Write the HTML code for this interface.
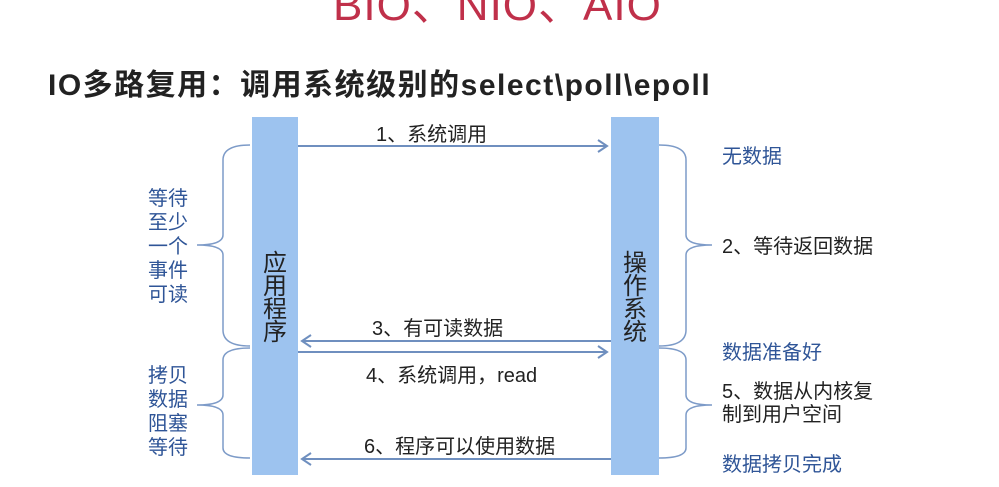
<!DOCTYPE html>
<html><head><meta charset="utf-8"><style>
body{margin:0;width:999px;height:487px;background:#fff;position:relative;overflow:hidden;font-family:"Liberation Sans","Noto Sans CJK SC",sans-serif}
.a{position:absolute;white-space:nowrap}
.bl{color:#2f5597;font-size:19px}
.bk{color:#222;font-size:20px}
</style></head><body>
<div class="a" style="left:333px;top:-31px;font-size:44px;color:#c0304a;letter-spacing:1px">BIO、NIO、AIO</div>
<div class="a" style="left:48px;top:60px;font-size:30px;font-weight:bold;color:#222;letter-spacing:1.5px">IO多路复用：调用系统级别的select\poll\epoll</div>
<svg class="a" style="left:0;top:0" width="999" height="487">
<rect x="252" y="117" width="46" height="358" fill="#9dc3ef"/>
<rect x="611" y="117" width="48" height="358" fill="#9dc3ef"/>
<g stroke="#6f8fbf" stroke-width="2" fill="none">
<line x1="298" y1="146" x2="607" y2="146"/><path d="M598 140 L607 146 L598 152"/>
<line x1="302" y1="341" x2="611" y2="341"/><path d="M311 335 L302 341 L311 347"/>
<line x1="298" y1="352" x2="607" y2="352"/><path d="M598 346 L607 352 L598 358"/>
<line x1="302" y1="459" x2="611" y2="459"/><path d="M311 453 L302 459 L311 465"/>
</g>
<g stroke="#7d9bc8" stroke-width="1.5" fill="none">
<path d="M250 145 Q223 145 223 160 L223 235 Q223 245 197 245 Q223 245 223 255 L223 330 Q223 346 250 346"/>
<path d="M250 348 Q223 348 223 360 L223 395 Q223 405 197 405 Q223 405 223 415 L223 448 Q223 458 250 458"/>
<path d="M659 145 Q686 145 686 160 L686 235 Q686 245 712 245 Q686 245 686 255 L686 330 Q686 346 659 346"/>
<path d="M659 348 Q686 348 686 360 L686 395 Q686 405 712 405 Q686 405 686 415 L686 448 Q686 458 659 458"/>
</g>
</svg>
<div class="a" style="left:263px;top:252px;font-size:24px;line-height:23px;color:#222;width:24px;white-space:normal">应用程序</div>
<div class="a" style="left:623px;top:252px;font-size:24px;line-height:23px;color:#222;width:24px;white-space:normal">操作系统</div>
<div class="a bk" style="left:376px;top:118px">1、系统调用</div>
<div class="a bk" style="left:372px;top:312px">3、有可读数据</div>
<div class="a bk" style="left:366px;top:359px">4、系统调用，read</div>
<div class="a bk" style="left:364px;top:430px">6、程序可以使用数据</div>
<div class="a bl" style="left:148px;top:187px;font-size:20px;line-height:24px;white-space:normal;width:42px">等待至少一个事件可读</div>
<div class="a bl" style="left:148px;top:364px;font-size:20px;line-height:24px;white-space:normal;width:42px">拷贝数据阻塞等待</div>
<div class="a bl" style="left:722px;top:140px;font-size:20px">无数据</div>
<div class="a bk" style="left:722px;top:230px">2、等待返回数据</div>
<div class="a bl" style="left:722px;top:336px;font-size:20px">数据准备好</div>
<div class="a bk" style="left:722px;top:381px;line-height:23px">5、数据从内核复<br>制到用户空间</div>
<div class="a bl" style="left:722px;top:448px;font-size:20px">数据拷贝完成</div>
</body></html>
